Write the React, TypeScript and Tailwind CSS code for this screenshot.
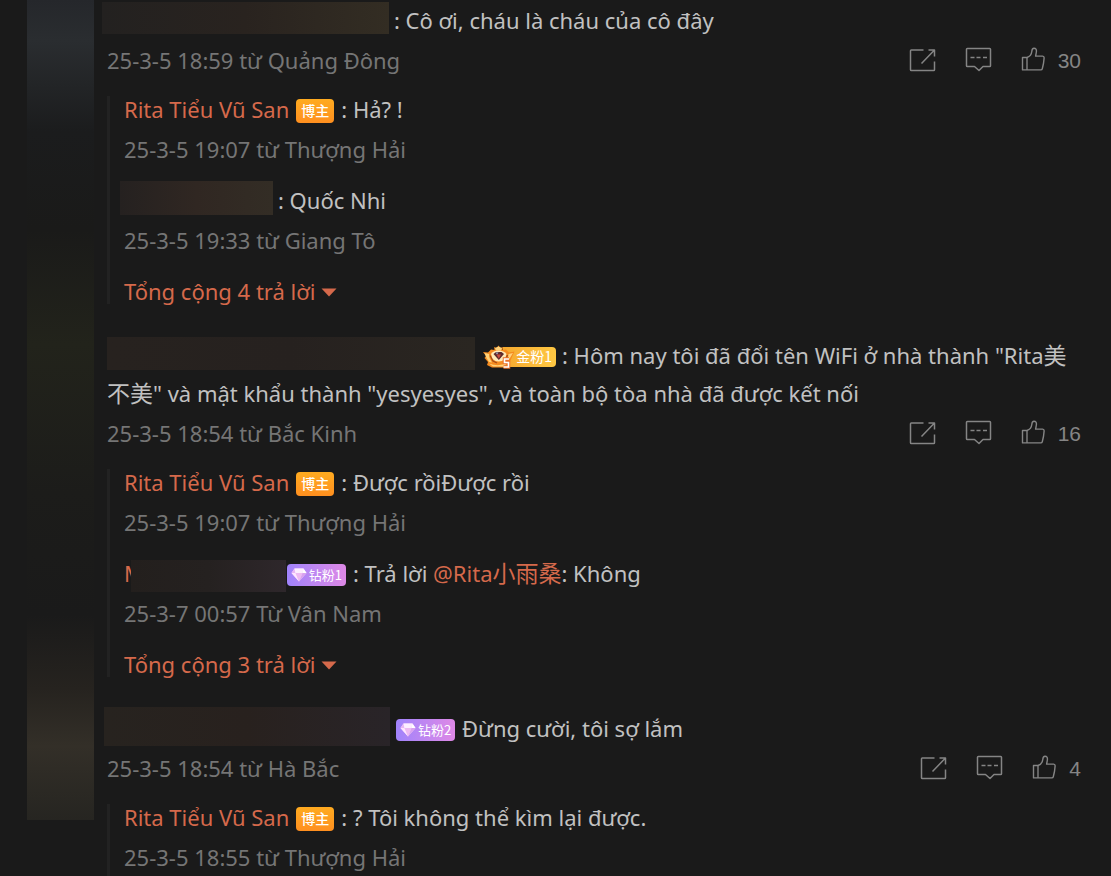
import React from "react";

function ShareIcon() {
  return (
    <svg width="28" height="28" viewBox="0 0 28 28" fill="none" stroke="#858585" strokeWidth="1.5" strokeLinejoin="round" aria-hidden="true">
      <path d="M14.5 4H2.3Q1.5 4 1.5 4.800V23.700Q1.5 24.500 2.300 24.500H24.700Q25.500 24.500 25.500 23.700V15.500" />
      <path d="M19.500 4H25.500V10.500M25 4.500L12.500 17.500" />
    </svg>
  );
}

function CommentIcon() {
  return (
    <svg width="28" height="28" viewBox="0 0 28 28" fill="none" stroke="#858585" strokeWidth="1.5" strokeLinejoin="round" aria-hidden="true">
      <path d="M2.300 2.500H24.700Q25.500 2.500 25.500 3.300V19.700Q25.500 20.500 24.700 20.500H18L14 24.500L9.500 20.500H2.300Q1.500 20.500 1.500 19.700V3.300Q1.500 2.500 2.300 2.500Z" />
      <path d="M5.500 11.500H9.500M11.500 11.500H15.500M18 11.500H22" />
    </svg>
  );
}

function LikeIcon() {
  return (
    <svg width="24" height="28" viewBox="0 0 24 28" fill="none" stroke="#858585" strokeWidth="1.4" strokeLinejoin="round" aria-hidden="true">
      <path d="M1.5 11.500H6C9 10.500 10.5 8.500 10.8 5.500C10.9 3.300 11.6 2.200 13 2.200C14.8 2.200 15.6 3.500 15.4 5.500C15.3 7.300 14.8 8.700 14.6 10.100H21.6Q23.3 10.300 23.1 12.100C22.9 15.500 22.3 19.100 21.3 22.800Q21 23.900 19.8 23.900H1.5Z" />
      <path d="M6 11.500V23.900" />
    </svg>
  );
}

function Diamond() {
  return (
    <svg width="16" height="16" viewBox="0 0 16 16" aria-hidden="true">
      <path d="M3.5 1.5H12.5L15.5 6L8 14.5L0.5 6Z" fill="#f6d4fb" />
      <path d="M3.5 1.5L4.5 6H0.5Z" fill="#e9b6f5" />
      <path d="M12.5 1.5L11.5 6H15.5Z" fill="#fff" />
      <path d="M0.5 6H4.5L8 14.5Z" fill="#ffe6ff" />
      <path d="M4.5 6H11.5L8 14.5Z" fill="#eeb9f2" />
      <path d="M11.5 6H15.5L8 14.5Z" fill="#d8a2ef" />
      <path d="M3.5 1.5H12.5L11.5 6H4.5Z" fill="#fdeeff" />
    </svg>
  );
}

function Crown() {
  return (
    <svg className="relative shrink-0" width="32" height="24" viewBox="0 0 32 24" aria-hidden="true">
      <path d="M0 7L5 7.500L8 4.500L11.500 5L11 2L13.500 3L15.500 0.500L17.500 3L20 2L19.500 5L23 4.500L26 7.500L31.500 6.500L29 12L26 19L21 22.500H9L4 20L5 17L1.500 13L3 11Z" fill="#f58b1f" />
      <path d="M1.500 8L6 9L6.500 13L9 17.500L6 17L3.500 13ZM30 8L25.500 9L25 13L23 17L27 13ZM6 18.500Q15.500 22 24 18L21 21.500H10ZM12 3L15.500 1.500L19 3L18 5.500H13Z" fill="#ffd27a" />
      <path d="M8 9Q10 5.500 15.500 5.500Q21 5.500 23.500 9L22 14Q15.500 19 9.500 14Z" fill="#ffe9b8" />
      <path d="M10.500 9L13 7H18.500L21 9L15.800 15Z" fill="#5d2a2c" />
      <path d="M13.500 9.500H18L15.800 13.500Z" fill="#c9483f" />
      <path d="M12.500 7.500L14 9.500L15.500 7.500Z" fill="#9fb0c8" />
      <path d="M7 10.500L10 16L14 18M24.500 10L23.500 12.500" fill="none" stroke="#a44b18" strokeWidth="1.300" />
      <path d="M26 14H21.500V17.500H25.500V22H20.500" fill="none" stroke="#e9702a" strokeWidth="3.500" />
      <path d="M26 14H21.500V17.500H25.500V22H20.500" fill="none" stroke="#fff" strokeWidth="1.600" />
    </svg>
  );
}

const badgeBox = "font-['Noto_Sans_CJK_SC',sans-serif] -mt-2 -mb-1.5 inline-flex items-center align-middle leading-none text-white";

function OwnerBadge() {
  return (
    <span className={`${badgeBox} mx-[7px] h-6 w-[38px] justify-center rounded bg-linear-to-b from-[#ffab20] to-[#ff8f1f] pb-0.5 text-sm font-medium`}>
      博主
    </span>
  );
}

function DiamondBadge({ level }: { level: number }) {
  return (
    <span className={`${badgeBox} mr-[7px] h-[22px] w-[59px] justify-center gap-0.5 rounded bg-linear-to-r from-[#a083fb] to-[#de88e6] text-[13px]`}>
      <Diamond />
      <span className="pb-0.5">{`钻粉${level}`}</span>
    </span>
  );
}

function GoldBadge({ level }: { level: number }) {
  return (
    <span className={`${badgeBox} ml-2 mr-[6px] h-6 w-[73px] text-sm`}>
      <Crown />
      <span className="-ml-3 flex h-5 flex-1 items-center justify-end rounded-r bg-linear-to-r from-[#f5a92f] to-[#ffc843] pr-1 pb-0.5">{`金粉${level}`}</span>
    </span>
  );
}

function HiddenName({ className }: { className: string }) {
  return <span className={`inline-block bg-linear-to-r align-middle ${className}`} />;
}

function Han({ children }: { children: string }) {
  return <span lang="zh" className="text-[23px] leading-none">{children}</span>;
}

function Actions({ likes }: { likes: number }) {
  const button = "flex cursor-pointer items-center";
  return (
    <div className="flex h-6 items-center">
      <button type="button" aria-label="Chia sẻ" className={button}><ShareIcon /></button>
      <button type="button" aria-label="Bình luận" className={`${button} ml-7`}><CommentIcon /></button>
      <button type="button" aria-label="Thích" className={`${button} ml-7 gap-[13px] font-['Liberation_Sans',sans-serif] text-[21px] leading-6 text-[#858585]`}>
        <LikeIcon />
        <span className="pt-0.5">{likes}</span>
      </button>
    </div>
  );
}

function Comment({ meta, likes, body, children }: { meta: string; likes: number; body: React.ReactNode; children: React.ReactNode }) {
  return (
    <article>
      <p className="leading-[38px]">{body}</p>
      <div className="mt-2 flex h-[26px] items-center justify-between">
        <span className="text-[#757575]">{meta}</span>
        <Actions likes={likes} />
      </div>
      <div className="mt-[23px] flex flex-col gap-[25px] border-l-3 border-[#222222] pl-[14px]">{children}</div>
    </article>
  );
}

function Reply({ meta, children }: { meta: string; children: React.ReactNode }) {
  return (
    <div className="leading-[26px] only:pb-1.5">
      <p>{children}</p>
      <p className="mt-[14px] text-[#757575]">{meta}</p>
    </div>
  );
}

function Owner() {
  return (
    <>
      <a href="#rita" className="text-[#d5694b]">Rita Tiểu Vũ San</a>
      <OwnerBadge />
    </>
  );
}

function MoreReplies({ count }: { count: number }) {
  return (
    <button type="button" className="flex cursor-pointer items-center gap-1.5 self-start leading-[26px] text-[#d5694b]">
      Tổng cộng {count} trả lời
      <svg width="16" height="11" viewBox="0 0 16 11" aria-hidden="true"><path d="M0.5 2.500H15.500L8 10.500Z" fill="currentColor" /></svg>
    </button>
  );
}

export default function App() {
  return (
    <div className="flex min-h-screen items-start gap-[13px] overflow-x-hidden bg-[#1a1a1a] pr-[30px] pl-[27px] font-['Noto_Sans','Noto_Sans_CJK_SC',sans-serif] text-[22px] text-[#c1c1c1]">
      <aside className="h-[820px] w-[67px] shrink-0 bg-[linear-gradient(#25272b_0%,#2a2d30_5%,#1b1c1d_16%,#1a1a19_28%,#22231b_42%,#1c1c1a_60%,#1a1a1a_75%,#26231f_84%,#332f28_91%,#262521_100%)]" />
      <main className="flex min-w-0 flex-1 flex-col gap-8 pt-px">
        <Comment
          meta="25-3-5 18:59 từ Quảng Đông"
          likes={30}
          body={<><HiddenName className="-mt-4 -mb-1.5 -ml-[5px] mr-[5px] h-8 w-[287px] from-[#232120] via-[#29231f] to-[#332d23]" />: Cô ơi, cháu là cháu của cô đây</>}
        >
          <Reply meta="25-3-5 19:07 từ Thượng Hải"><Owner />: Hả? !</Reply>
          <Reply meta="25-3-5 19:33 từ Giang Tô">
            <HiddenName className="-mt-4 -mb-1.5 -ml-1 mr-[5px] h-[34px] w-[153px] from-[#252120] via-[#302722] to-[#332d25]" />: Quốc Nhi
          </Reply>
          <MoreReplies count={4} />
        </Comment>

        <Comment
          meta="25-3-5 18:54 từ Bắc Kinh"
          likes={16}
          body={<><HiddenName className="-mt-4 -mb-1.5 h-[33px] w-[368px] from-[#27221f] via-[#26211f] to-[#2a2621]" /><GoldBadge level={1} />: Hôm nay tôi đã đổi tên WiFi ở nhà thành "Rita<Han>美不美</Han>" và mật khẩu thành "yesyesyes", và toàn bộ tòa nhà đã được kết nối</>}
        >
          <Reply meta="25-3-5 19:07 từ Thượng Hải"><Owner />: Được rồiĐược rồi</Reply>
          <Reply meta="25-3-7 00:57 Từ Vân Nam">
            <span className="text-[#d5694b]">M</span>
            <HiddenName className="-my-2.5 -ml-[13px] mr-px h-8 w-[155px] from-[#231f1d] via-[#252120] to-[#2e272b]" />
            <DiamondBadge level={1} />: Trả lời <a href="#rita" className="text-[#d5694b]">@Rita<Han>小雨桑</Han></a>: Không
          </Reply>
          <MoreReplies count={3} />
        </Comment>

        <Comment
          meta="25-3-5 18:54 từ Hà Bắc"
          likes={4}
          body={<><HiddenName className="-mt-4 -mb-1.5 -ml-[3px] mr-[6px] h-[39px] w-[286px] from-[#27231f] via-[#28211e] to-[#292428]" /><DiamondBadge level={2} />Đừng cười, tôi sợ lắm</>}
        >
          <Reply meta="25-3-5 18:55 từ Thượng Hải"><Owner />: ? Tôi không thể kìm lại được.</Reply>
        </Comment>
      </main>
    </div>
  );
}
